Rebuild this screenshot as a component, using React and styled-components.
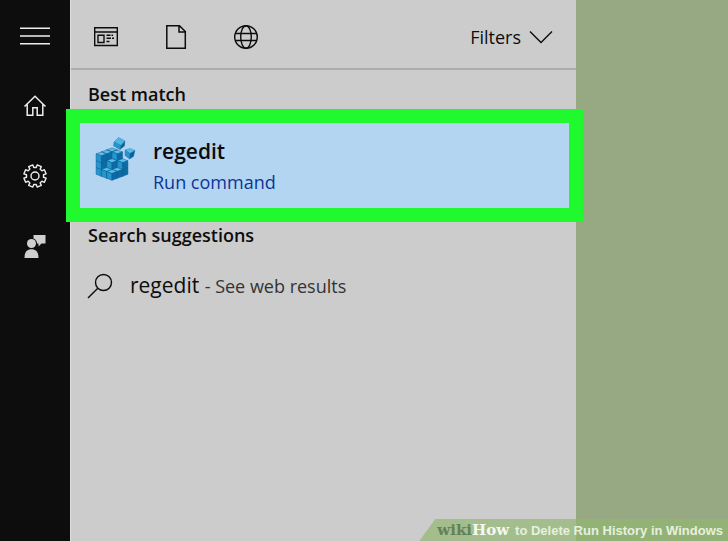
import React from 'react'
import styled, { createGlobalStyle } from 'styled-components';

// number of blocks stacked on each cell of the registry cube, [right][left]
const STACKS = [
  [3, 3, 3],
  [3, 2, 1],
  [2, 1, 1],
];

const Block = ({ x, y, w = 5.3, d = 2, h = 6.8 }) => (
  <g stroke="#0c5f94" strokeWidth="0.5" strokeLinejoin="round">
    <path d={`M${x} ${y - d} L${x + w} ${y} L${x} ${y + d} L${x - w} ${y} Z`} fill="#58bfe6" />
    <path d={`M${x - w} ${y} L${x} ${y + d} V${y + d + h} L${x - w} ${y + h} Z`} fill="#2596cd" />
    <path d={`M${x + w} ${y} L${x} ${y + d} V${y + d + h} L${x + w} ${y + h} Z`} fill="#0d6aa4" />
  </g>
)

const RegistryIcon = () => {
  const blocks = [];
  STACKS.forEach((row, i) => row.forEach((count, j) => {
    for (let k = 0; k < count; k++) {
      blocks.push({ id: `${i}${j}${k}`, x: 18 + (i - j) * 5.3, y: 27.5 + (i + j) * 2 - k * 6.8 });
    }
  }));
  return <svg width="44" height="46" viewBox="0 0 44 46" aria-hidden="true">
    {blocks.map((b) => <Block key={b.id} x={b.x} y={b.y} />)}
    <g strokeLinejoin="round" stroke="#1577ad" strokeWidth="0.4">
      <path d="M24.500 1.500 L31 5 L27 9.500 L20 6 Z" fill="#4fb6e0" />
      <path d="M20 6 L27 9.500 L26 13.500 L19.500 10 Z" fill="#2596cd" />
      <path d="M31 5 L27 9.500 L26 13.500 L30.500 10 Z" fill="#0d5f94" />
      <path d="M31 14 L36 12.500 L41 14.500 L36 17.500 Z" fill="#58bfe6" />
      <path d="M31 14 L36 17.500 L35.500 23 L31 19.500 Z" fill="#2596cd" />
      <path d="M41 14.500 L36 17.500 L35.500 23 L39.500 20.500 Z" fill="#0d5f94" />
    </g>
  </svg>
}

const MenuIcon = () => (
  <Glyph width="32" height="24" viewBox="0 0 32 24" $weight={1.6}>
    <path d="M1 4.200 H31 M1 12 H31 M1 19.800 H31" />
  </Glyph>
)

const HomeIcon = () => (
  <Glyph width="24" height="24" viewBox="0 0 24 24" $weight={1.5}>
    <path d="M1.500 12.500 L12 2.300 L22.500 12.500 M4.200 10.500 V21.300 H9.800 V13.800 H14.200 V21.300 H19.800 V10.500" />
  </Glyph>
)

const gearPath = () => {
  const points = [];
  for (let i = 0; i < 8; i++) {
    const mid = (i * Math.PI) / 4 + Math.PI / 8;
    [[-0.25, 8.6], [-0.2, 11.3], [0.2, 11.3], [0.25, 8.6]].forEach(([a, r]) => {
      points.push(`${(12 + r * Math.sin(mid + a)).toFixed(2)} ${(12 - r * Math.cos(mid + a)).toFixed(2)}`);
    });
  }
  return `M${points.join(' L')} Z`;
}

const GearIcon = () => (
  <Glyph width="24" height="24" viewBox="0 0 24 24" $weight={1.4}>
    <path d={gearPath()} strokeLinejoin="round" />
    <circle cx="12" cy="12" r="4" />
  </Glyph>
)

const FeedbackIcon = () => (
  <svg width="24" height="26" viewBox="0 0 24 26" fill="#cfcfcf" aria-hidden="true">
    <path d="M10.500 2 H22.500 V10.500 H18.500 L15.500 13.500 V10.500 H14 A5.500 5.500 0 0 0 10.500 5.500 Z" />
    <circle cx="8.500" cy="10.500" r="4.500" />
    <path d="M1.500 25 C1.500 19 4 16.300 8.500 16.300 C13 16.300 15.500 19 15.500 25 Z" />
  </svg>
)

const AppsIcon = () => (
  <Glyph width="26" height="24" viewBox="0 0 26 24" $weight={1.4}>
    <path d="M1.700 2.700 H24.300 V20.500 H1.700 Z M1.700 7 H24.300 M5 10.200 H11 V17.500 H5 Z M13.500 10.300 H17.500 M13.500 13.200 H18 M13.500 16.500 H16.500 M18.500 10.300 H20 M19 13.200 H21" />
  </Glyph>
)

const DocumentIcon = () => (
  <Glyph width="24" height="26" viewBox="0 0 24 26" $weight={1.5}>
    <path d="M2.800 1.700 H15.500 L21.300 7.500 V24.300 H2.800 Z M15 1.700 V8 H21.300" />
  </Glyph>
)

const WebIcon = () => (
  <Glyph width="26" height="26" viewBox="0 0 26 26" $weight={1.4}>
    <circle cx="13" cy="13" r="11.300" />
    <ellipse cx="13" cy="13" rx="5.300" ry="11.300" />
    <path d="M2.500 9.500 H23.500 M2.500 16.500 H23.500" />
  </Glyph>
)

const ChevronIcon = () => (
  <Glyph width="24" height="14" viewBox="0 0 24 14" $weight={1.4}>
    <path d="M1 1.500 L12 12.500 L23 1.500" />
  </Glyph>
)

const SearchIcon = () => (
  <Glyph width="26" height="26" viewBox="0 0 26 26" $weight={1.4}>
    <circle cx="16.500" cy="9.500" r="8" />
    <path d="M10.800 15.200 L1 25" />
  </Glyph>
)

const rail = [
  { label: "Menu", Icon: MenuIcon },
  { label: "Home", Icon: HomeIcon },
  { label: "Settings", Icon: GearIcon },
  { label: "Feedback", Icon: FeedbackIcon },
];

const scopes = [
  { label: "Apps", Icon: AppsIcon },
  { label: "Documents", Icon: DocumentIcon },
  { label: "Web", Icon: WebIcon },
];

const App = () => {
  return <>
    <GlobalStyle />
    <Desktop>
      <Rail>
        {rail.map(({ label, Icon }) => <RailButton key={label} aria-label={label}><Icon /></RailButton>)}
      </Rail>
      <Panel>
        <Toolbar>
          {scopes.map(({ label, Icon }) => <ScopeButton key={label} aria-label={label}><Icon /></ScopeButton>)}
          <FiltersButton>Filters <ChevronIcon /></FiltersButton>
        </Toolbar>
        <Heading>Best match</Heading>
        <BestMatch>
          <RegistryIcon />
          <Labels>
            <Title>regedit</Title>
            <Subtitle>Run command</Subtitle>
          </Labels>
        </BestMatch>
        <Heading $tight>Search suggestions</Heading>
        <Suggestion>
          <SearchIcon />
          <span>regedit <small>- See web results</small></span>
        </Suggestion>
      </Panel>
      <Caption>
        <Brand><b>wiki</b>How</Brand>
        <span>to Delete Run History in Windows</span>
      </Caption>
    </Desktop>
  </>
}

const GlobalStyle = createGlobalStyle`
  * {
    box-sizing: border-box;
  }
  body {
    margin: 0;
    font-family: "Open Sans", "Noto Sans", sans-serif;
    color: #0c0c0c;
  }
  button {
    border: 0;
    padding: 0;
    background: none;
    color: inherit;
    font: inherit;
    text-align: left;
    cursor: pointer;
  }
  svg {
    display: block;
    flex: none;
  }
`;

const Glyph = styled.svg.attrs({ "aria-hidden": true })`
  fill: none;
  stroke: currentColor;
  stroke-width: ${({ $weight }) => $weight};
`;

const Desktop = styled.div`
  position: relative;
  display: grid;
  grid-template-columns: 70px 1fr;
  min-height: 100vh;
  padding-right: 152px;
  background: #97a983;
`;

const Rail = styled.nav`
  display: flex;
  flex-direction: column;
  padding-top: 1px;
  background: #0d0d0d;
  color: #eeeeee;
`;

const RailButton = styled.button`
  display: grid;
  place-items: center;
  height: 70px;
`;

const Panel = styled.main`
  border-left: 1px solid #dddddd;
  background: #cccccc;
`;

const Toolbar = styled.div`
  display: flex;
  height: 70px;
  padding-top: 6px;
  border-bottom: 2px solid #adadad;
`;

const ScopeButton = styled.button`
  display: grid;
  place-items: center;
  width: 70px;
`;

const FiltersButton = styled.button`
  display: flex;
  align-items: center;
  gap: 8px;
  margin-left: auto;
  padding-right: 23px;
  font-size: 18px;
`;

const Heading = styled.h2`
  margin: 0;
  padding: ${({ $tight }) => ($tight ? "0" : "11px")} 17px 0;
  height: ${({ $tight }) => ($tight ? "28px" : "39px")};
  font-size: 18px;
  font-weight: 600;
  line-height: 26px;
`;

const BestMatch = styled.button`
  position: relative;
  display: flex;
  align-items: flex-start;
  gap: 15px;
  width: 100%;
  height: 113px;
  padding: 27px 23px;
  background: #b3d5f2;

  &::after {
    content: "";
    position: absolute;
    inset: 0 -7px 0 -5px;
    border: 14px solid #21f92f;
  }
`;

const Labels = styled.span`
  display: flex;
  flex-direction: column;
`;

const Title = styled.span`
  font-size: 21px;
  font-weight: 600;
  line-height: 30px;
`;

const Subtitle = styled.span`
  font-size: 18px;
  line-height: 32px;
  color: #0c3595;
`;

const Suggestion = styled.button`
  display: flex;
  align-items: center;
  gap: 17px;
  width: 100%;
  padding: 17px 16px;
  font-size: 21px;
  line-height: 36px;

  small {
    font-size: 18px;
    color: #333333;
  }
`;

const Caption = styled.footer`
  position: absolute;
  right: 0;
  bottom: 0;
  display: flex;
  align-items: center;
  gap: 6px;
  height: 22px;
  padding: 0 5px 0 18px;
  background: rgba(145, 184, 112, 0.7);
  clip-path: polygon(16px 0, 100% 0, 100% 100%, 0 100%);
  font-family: "Liberation Sans", Arial, sans-serif;
  font-size: 13px;
  font-weight: 700;
  color: #e6f0dd;
`;

const Brand = styled.span`
  font-family: "DejaVu Serif", serif;
  font-size: 15px;
  color: #f4f8f0;

  b {
    color: #64805a;
  }
`;

export default App
